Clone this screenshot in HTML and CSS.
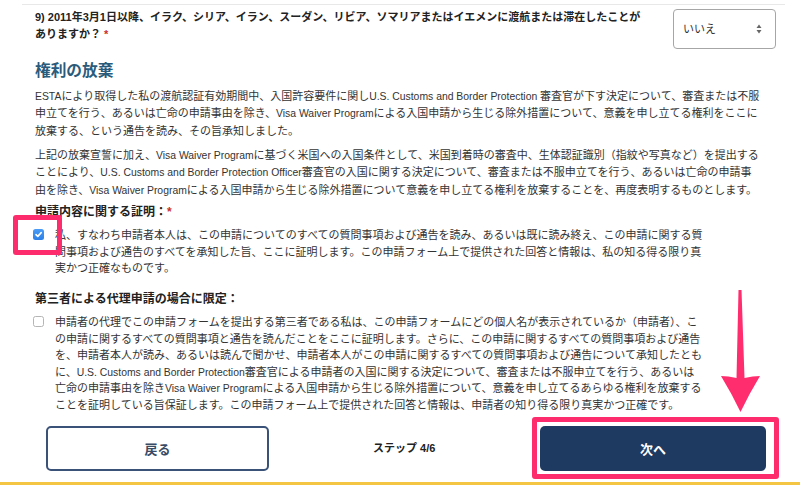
FILE: index.html
```html
<!DOCTYPE html>
<html lang="ja">
<head>
<meta charset="utf-8">
<title>ESTA</title>
<link rel="stylesheet" href="styles.css">
</head>
<body>
<div class="page">
  <div class="topline"></div>

  <div class="question-row">
    <div class="q-text">9) 2011年3月1日以降、イラク、シリア、イラン、スーダン、リビア、ソマリアまたはイエメンに渡航または滞在したことが<br>ありますか？ <span class="req">*</span></div>
    <div class="select">
      <span>いいえ</span>
      <svg class="sel-arrows" width="6" height="10" viewBox="0 0 6 10"><polygon points="3,0.5 5.5,4 0.5,4" fill="#666"/><polygon points="0.5,6 5.5,6 3,9.5" fill="#666"/></svg>
    </div>
  </div>

  <h2 class="heading">権利の放棄</h2>

  <p class="para p1"><span class="en">ESTA</span>により取得した私の渡航認証有効期間中、入国許容要件に関し<span class="en">U.S. Customs and Border Protection </span>審査官が下す決定について、審査または不服<br>申立てを行う、あるいは亡命の申請事由を除き、<span class="en">Visa Waiver Program</span>による入国申請から生じる除外措置について、意義を申し立てる権利をここに<br>放棄する、という通告を読み、その旨承知しました。</p>

  <p class="para p2">上記の放棄宣誓に加え、<span class="en">Visa Waiver Program</span>に基づく米国への入国条件として、米国到着時の審査中、生体認証識別（指紋や写真など）を提出する<br>ことにより、<span class="en">U.S. Customs and Border Protection Officer</span>審査官の入国に関する決定について、審査または不服申立てを行う、あるいは亡命の申請事<br>由を除き、<span class="en">Visa Waiver Program</span>による入国申請から生じる除外措置について意義を申し立てる権利を放棄することを、再度表明するものとします。</p>

  <h3 class="sub cert-head">申請内容に関する証明：<span class="req">*</span></h3>
  <div class="check-row cert-row">
    <span class="box checked"><svg width="11" height="11" viewBox="0 0 11 11"><path d="M3 5.6 L4.8 7.4 L8.2 3.6" fill="none" stroke="#fff" stroke-width="1.6" stroke-linecap="round" stroke-linejoin="round"/></svg></span>
    <div class="label">私、すなわち申請者本人は、この申請についてのすべての質問事項および通告を読み、あるいは既に読み終え、この申請に関する質<br>問事項および通告のすべてを承知した旨、ここに証明します。この申請フォーム上で提供された回答と情報は、私の知る得る限り真<br>実かつ正確なものです。</div>
  </div>

  <h3 class="sub third-head">第三者による代理申請の場合に限定：</h3>
  <div class="check-row third-row">
    <span class="box"></span>
    <div class="label">申請者の代理でこの申請フォームを提出する第三者である私は、この申請フォームにどの個人名が表示されているか（申請者）、こ<br>の申請に関するすべての質問事項と通告を読んだことをここに証明します。さらに、この申請に関するすべての質問事項および通告<br>を、申請者本人が読み、あるいは読んで聞かせ、申請者本人がこの申請に関するすべての質問事項および通告について承知したとも<br>に、<span class="en">U.S. Customs and Border Protection</span>審査官による申請者の入国に関する決定について、審査または不服申立てを行う、あるいは<br>亡命の申請事由を除き<span class="en">Visa Waiver Program</span>による入国申請から生じる除外措置について、意義を申し立てるあらゆる権利を放棄する<br>ことを証明している旨保証します。この申請フォーム上で提供された回答と情報は、申請者の知り得る限り真実かつ正確です。</div>
  </div>

  <div class="footer">
    <button class="btn btn-back">戻る</button>
    <span class="step">ステップ 4/6</span>
    <button class="btn btn-next">次へ</button>
  </div>
  <div class="yellow"></div>

  <div class="hl hl-check"></div>
  <div class="hl hl-next"></div>
  <svg class="arrow" width="50" height="130" viewBox="0 0 50 130">
    <path d="M23.5 0 L26.5 0 L29.5 88 Q38 86 45 86 Q34 104 25.5 122 Q17 104 6 86 Q13 86 21.5 88 Z" fill="#ff2d6e"/>
  </svg>
</div>
</body>
</html>
```

FILE: styles.css
```css
* { box-sizing: border-box; }

html, body {
  margin: 0;
  padding: 0;
  background: #fff;
}

body {
  font-family: "Liberation Sans", "Noto Sans CJK JP", sans-serif;
  font-size: 11px;
  line-height: 16.6px;
  color: #333;
}

.page {
  position: relative;
  width: 800px;
  height: 485px;
  overflow: hidden;
}

.topline {
  height: 1px;
  background: #e8e8e8;
  margin: 4px 15px 0 22px;
}

.question-row {
  display: flex;
  justify-content: space-between;
  align-items: flex-start;
  margin-top: 4px;
  padding: 0 24px 0 35px;
}

.q-text {
  font-weight: bold;
  white-space: nowrap;
  color: #222;
  line-height: 17px;
}

.req {
  color: #c9302c;
}

.en {
  font-size: 10.4px;
  line-height: 1;
}

.select {
  width: 103px;
  height: 40px;
  border: 1px solid #a6a6a6;
  border-radius: 4px;
  display: flex;
  align-items: center;
  justify-content: space-between;
  padding: 0 13px 0 9px;
  color: #333;
  font-size: 11px;
}

.heading {
  margin: 10.5px 0 0 35px;
  font-size: 15.7px;
  line-height: 22px;
  font-weight: bold;
  color: #2b5b7b;
}

.para {
  margin: 0 0 0 35px;
  white-space: nowrap;
  line-height: 17.5px;
}

.p1 { margin-top: 6.1px; }
.p2 { margin-top: 6.5px; }

.sub {
  margin: 0 0 0 35px;
  font-size: 12px;
  line-height: 16px;
  font-weight: bold;
  color: #222;
}

.cert-head { margin-top: 4.8px; }
.third-head { margin-top: 14px; }

.check-row {
  display: flex;
  align-items: flex-start;
  padding-left: 33px;
}

.cert-row { margin-top: 7.17px; }
.third-row { margin-top: 7.17px; }

.box {
  flex: none;
  width: 11px;
  height: 11px;
  margin-top: 2.4px;
  border-radius: 2.5px;
  border: 1px solid #b5b5b5;
  background: #fff;
  display: flex;
}

.box.checked {
  border: none;
  background: linear-gradient(#4a9cf6, #2c7fe8);
}

.label {
  margin-left: 11px;
  white-space: nowrap;
}

.footer {
  display: flex;
  align-items: center;
  margin-top: 12.33px;
  padding: 0 34px 0 46px;
}

.btn {
  font-family: "Liberation Sans", "Noto Sans CJK JP", sans-serif;
  font-size: 13px;
  font-weight: bold;
  height: 45px;
  border-radius: 5px;
  cursor: pointer;
}

.btn-back {
  width: 223px;
  background: #fff;
  border: 2px solid #3a5278;
  color: #3a4b64;
}

.step {
  margin-left: 104px;
  font-weight: bold;
  color: #222;
}

.btn-next {
  margin-left: auto;
  width: 226px;
  background: #1f3a60;
  border: none;
  color: #fff;
}

.yellow {
  margin-top: 11px;
  height: 3px;
  background: #f4c443;
}

.hl {
  position: absolute;
  border: 5px solid #fd2d6d;
  border-radius: 3px;
}

.hl-check {
  left: 13px;
  top: 215px;
  width: 49px;
  height: 40px;
}

.hl-next {
  left: 532px;
  top: 417px;
  width: 247px;
  height: 62px;
}

.arrow {
  position: absolute;
  left: 715px;
  top: 290px;
}
```
